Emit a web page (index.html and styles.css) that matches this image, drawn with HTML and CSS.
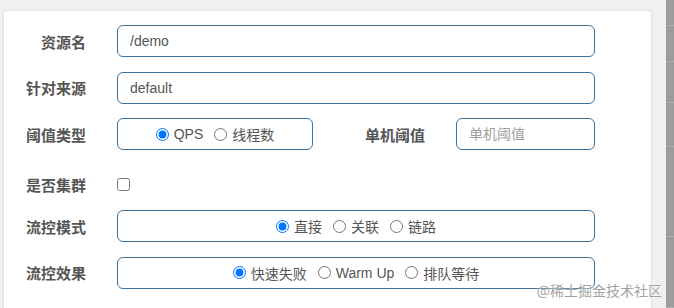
FILE: index.html
```html
<!DOCTYPE html>
<html>
    <head>
        <title>流控规则</title>
        <meta charset="UTF-8">
        <link rel="stylesheet" href="styles.css">
    </head>
    <body>
        <div class="page">
            <div class="card">
                <!-- 资源名 -->
                <div class="row">
                    <label class="label">资源名</label>
                    <input class="input-box wide" type="text" value="/demo">
                </div>
                <!-- 针对来源 -->
                <div class="row">
                    <label class="label">针对来源</label>
                    <input class="input-box wide" type="text" value="default">
                </div>
                <!-- 阈值类型 + 单机阈值 -->
                <div class="row">
                    <label class="label">阈值类型</label>
                    <div class="radio-box small">
                        <label class="option"><input type="radio" name="grade" checked>QPS</label>
                        <label class="option"><input type="radio" name="grade">线程数</label>
                    </div>
                    <label class="label second">单机阈值</label>
                    <input class="input-box count" type="text" placeholder="单机阈值">
                </div>
                <!-- 是否集群 -->
                <div class="row row-check">
                    <label class="label">是否集群</label>
                    <input class="check" type="checkbox">
                </div>
                <!-- 流控模式 -->
                <div class="row">
                    <label class="label">流控模式</label>
                    <div class="radio-box wide">
                        <label class="option"><input type="radio" name="strategy" checked>直接</label>
                        <label class="option"><input type="radio" name="strategy">关联</label>
                        <label class="option"><input type="radio" name="strategy">链路</label>
                    </div>
                </div>
                <!-- 流控效果 -->
                <div class="row">
                    <label class="label">流控效果</label>
                    <div class="radio-box wide">
                        <label class="option"><input type="radio" name="behavior" checked>快速失败</label>
                        <label class="option"><input type="radio" name="behavior">Warm Up</label>
                        <label class="option"><input type="radio" name="behavior">排队等待</label>
                    </div>
                </div>
            </div>
            <div class="gutter"></div>
            <div class="scroll">
                <div class="scroll-line" style="height: 26px;"></div>
                <div class="scroll-line" style="height: 36px;"></div>
                <div class="scroll-line" style="height: 41px;"></div>
                <div class="scroll-line" style="height: 44px;"></div>
                <div class="scroll-line" style="height: 90px;"></div>
                <div class="scroll-line" style="height: 71px;"></div>
            </div>
        </div>
        <div class="watermark">@稀土掘金技术社区</div>
    </body>
</html>
```

FILE: styles.css
```css
* , *:before, *:after {
    box-sizing: border-box;
}
body {
    margin: 0px;
    height: 308px;
    overflow: hidden;
    background: #f0f0f0;
    font-family: "Liberation Sans", Arial, "Noto Sans CJK SC", sans-serif;
}
.page {
    display: flex;
    height: 308px;
}
.card {
    width: 649px;
    margin: 10px 0 0 3px;
    padding: 14px 0 0 1px;
    background: #fff;
    border: 1px solid #e2e2e2;
    border-bottom: none;
    border-radius: 4px 4px 0 0;
}
.gutter {
    width: 14px;
}
.scroll {
    flex: 1;
    background: #9c9c9c;
}
.scroll-line {
    border-bottom: 1px solid #b0b0b0;
}
.row {
    display: flex;
    align-items: center;
    height: 32px;
    margin-bottom: 14.5px;
}
/* margins collapse with the row above, so this is the whole gap */
.row-check {
    height: 22px;
    margin-top: 23.5px;
}
.label {
    width: 81px;
    margin-right: 31px;
    text-align: right;
    font-family: "Noto Sans CJK SC", sans-serif;
    font-weight: bold;
    font-size: 15px;
    color: #555;
}
.label.second {
    width: 112px;
}
.input-box {
    height: 32px;
    padding: 0 12px;
    border: 1px solid #3f7199;
    border-radius: 6px;
    font-family: "Liberation Sans", Arial, "Noto Sans CJK SC", sans-serif;
    font-size: 14px;
    color: #555;
    outline: none;
}
.input-box::placeholder {
    color: #a0a0a0;
}
.wide {
    width: 478px;
}
.count {
    width: 139px;
}
.radio-box {
    height: 32px;
    display: flex;
    align-items: center;
    justify-content: center;
    gap: 11px;
    border: 1px solid #3f7199;
    border-radius: 6px;
}
.radio-box.small {
    width: 196px;
}
.option {
    display: flex;
    align-items: center;
    font-family: "Liberation Sans", Arial, "Noto Sans CJK SC", sans-serif;
    font-size: 14px;
    color: #555;
}
.option input {
    margin: 0 5px 0 0;
}
.check {
    margin: 0;
    width: 13px;
    height: 13px;
}
.watermark {
    position: absolute;
    right: 12px;
    top: 280px;
    font-family: "Noto Sans CJK SC", sans-serif;
    font-size: 14px;
    color: #a3a3a3;
    text-shadow: 0 0 2px #fff;
}
```
